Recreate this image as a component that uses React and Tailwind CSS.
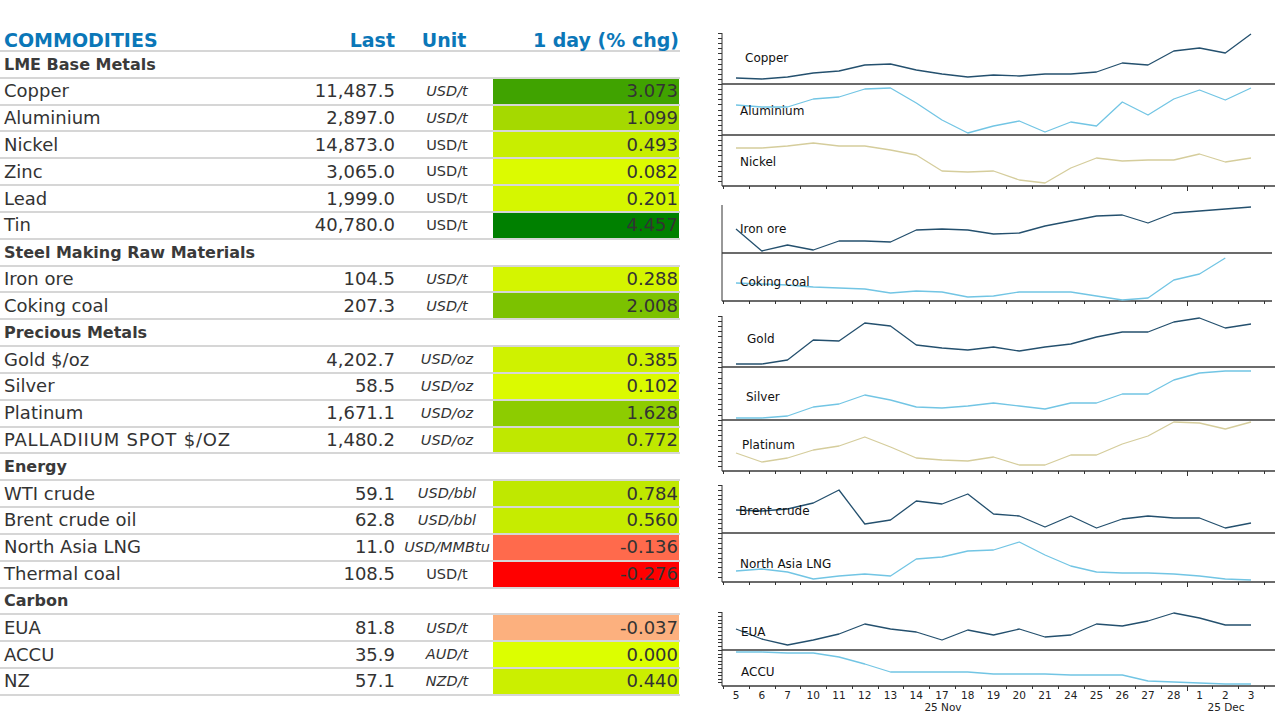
import React from "react";

const rows = [
  { sec: "LME Base Metals" },
  { n: "Copper", l: "11,487.5", u: "USD/t", it: true, c: "3.073", bg: "bg-[#40a300]" },
  { n: "Aluminium", l: "2,897.0", u: "USD/t", it: true, c: "1.099", bg: "bg-[#a5d900]" },
  { n: "Nickel", l: "14,873.0", u: "USD/t", it: false, c: "0.493", bg: "bg-[#c8ee00]" },
  { n: "Zinc", l: "3,065.0", u: "USD/t", it: false, c: "0.082", bg: "bg-[#dcfb00]" },
  { n: "Lead", l: "1,999.0", u: "USD/t", it: false, c: "0.201", bg: "bg-[#d5f700]" },
  { n: "Tin", l: "40,780.0", u: "USD/t", it: false, c: "4.457", bg: "bg-[#008000]" },
  { sec: "Steel Making Raw Materials" },
  { n: "Iron ore", l: "104.5", u: "USD/t", it: true, c: "0.288", bg: "bg-[#d4f500]" },
  { n: "Coking coal", l: "207.3", u: "USD/t", it: true, c: "2.008", bg: "bg-[#7cc200]" },
  { sec: "Precious Metals" },
  { n: "Gold $/oz", l: "4,202.7", u: "USD/oz", it: true, c: "0.385", bg: "bg-[#cff200]" },
  { n: "Silver", l: "58.5", u: "USD/oz", it: true, c: "0.102", bg: "bg-[#dbfa00]" },
  { n: "Platinum", l: "1,671.1", u: "USD/oz", it: true, c: "1.628", bg: "bg-[#8dcc00]" },
  { n: "PALLADIIUM SPOT $/OZ", l: "1,480.2", u: "USD/oz", it: true, c: "0.772", bg: "bg-[#bfe800]", x: "tracking-[0.8px]" },
  { sec: "Energy" },
  { n: "WTI crude", l: "59.1", u: "USD/bbl", it: true, c: "0.784", bg: "bg-[#bfe800]" },
  { n: "Brent crude oil", l: "62.8", u: "USD/bbl", it: true, c: "0.560", bg: "bg-[#c6ec00]" },
  { n: "North Asia LNG", l: "11.0", u: "USD/MMBtu", it: true, c: "-0.136", bg: "bg-[#ff6a4c]" },
  { n: "Thermal coal", l: "108.5", u: "USD/t", it: false, c: "-0.276", bg: "bg-[#ff0000]" },
  { sec: "Carbon" },
  { n: "EUA", l: "81.8", u: "USD/t", it: true, c: "-0.037", bg: "bg-[#fcb07e]" },
  { n: "ACCU", l: "35.9", u: "AUD/t", it: true, c: "0.000", bg: "bg-[#dcff00]" },
  { n: "NZ", l: "57.1", u: "NZD/t", it: true, c: "0.440", bg: "bg-[#cbef00]" },
];

const X = (i) => 736 + i * 25.75;
const DARK = "#24506e";
const LIGHT = "#72c5e4";
const KHAKI = "#d5cd9c";

const series = [
  { label: "Copper", lx: 745, ly: 62, color: DARK, y: [78, 79, 77, 73, 71, 65, 64, 70, 74, 77, 75, 76, 74, 74, 72, 63, 65, 51, 48, 53, 34] },
  { label: "Aluminium", lx: 740, ly: 115, color: LIGHT, y: [105, 107, 107, 99, 97, 89, 88, 103, 120, 133, 126, 121, 132, 122, 126, 102, 115, 99, 90, 100, 88] },
  { label: "Nickel", lx: 740, ly: 166, color: KHAKI, y: [148, 148, 146, 143, 146, 146, 150, 155, 171, 172, 171, 180, 183, 168, 158, 161, 160, 160, 154, 162, 158] },
  { label: "Iron ore", lx: 740, ly: 233, color: DARK, y: [229, 251, 245, 250, 241, 241, 242, 230, 229, 230, 234, 233, 226, 221, 216, 215, 223, 213, 211, 209, 207] },
  { label: "Coking coal", lx: 740, ly: 286, color: LIGHT, y: [283, 284, 285, 287, 288, 289, 293, 291, 292, 297, 296, 292, 292, 292, 296, 300, 298, 280, 274, 258] },
  { label: "Gold", lx: 747, ly: 343, color: DARK, y: [364, 364, 360, 340, 341, 323, 326, 345, 348, 350, 347, 351, 347, 344, 337, 332, 332, 322, 318, 328, 324] },
  { label: "Silver", lx: 746, ly: 401, color: LIGHT, y: [418, 418, 416, 407, 404, 395, 400, 407, 408, 406, 403, 406, 409, 403, 403, 394, 394, 380, 373, 371, 371] },
  { label: "Platinum", lx: 742, ly: 449, color: KHAKI, y: [453, 462, 458, 450, 446, 437, 447, 458, 460, 461, 457, 465, 465, 455, 455, 444, 436, 422, 423, 429, 422] },
  { label: "Brent crude", lx: 739, ly: 515, color: DARK, y: [510, 511, 509, 503, 490, 524, 520, 501, 504, 494, 514, 516, 527, 516, 528, 519, 516, 518, 518, 528, 523] },
  { label: "North Asia LNG", lx: 740, ly: 568, color: LIGHT, y: [571, 569, 572, 579, 576, 574, 576, 559, 557, 551, 550, 542, 555, 566, 572, 573, 573, 574, 576, 579, 580] },
  { label: "EUA", lx: 741, ly: 636, color: DARK, y: [629, 639, 645, 640, 634, 624, 629, 632, 640, 630, 635, 629, 637, 635, 624, 626, 621, 613, 618, 625, 625] },
  { label: "ACCU", lx: 741, ly: 676, color: LIGHT, y: [652, 652, 653, 653, 657, 664, 672, 672, 672, 672, 674, 674, 674, 675, 675, 675, 681, 682, 683, 684, 684] },
];

const groups = [
  { top: 33, seps: [84, 135], bottom: 186, ticks: true, end: 1275 },
  { top: 205, seps: [253], bottom: 301, ticks: false, end: 1272 },
  { top: 316, seps: [367, 420], bottom: 471, ticks: true, end: 1275 },
  { top: 485, seps: [533], bottom: 582, ticks: true, end: 1275 },
  { top: 612, seps: [650], bottom: 686, ticks: true, end: 1275 },
];

const dates = ["5", "6", "7", "10", "11", "12", "13", "14", "17", "18", "19", "20", "21", "24", "25", "26", "27", "28", "1", "2", "3"];

function Charts() {
  const els = [];
  groups.forEach((g, gi) => {
    const bounds = [g.top, ...g.seps, g.bottom];
    els.push(<line key={`v${gi}`} x1={722} y1={g.top} x2={722} y2={g.bottom} stroke="#333" strokeWidth="1" />);
    if (g.ticks) {
      for (let p = 0; p < bounds.length - 1; p++) {
        const h = bounds[p + 1] - bounds[p];
        for (let k = 0; k < 10; k++) {
          const yy = Math.round(bounds[p] + (h * k) / 10) + 0.5;
          els.push(<line key={`t${gi}-${p}-${k}`} x1={718} y1={yy} x2={722} y2={yy} stroke="#333" strokeWidth="1" />);
        }
      }
    }
    g.seps.forEach((s, si) => {
      els.push(<line key={`s${gi}-${si}`} x1={722} y1={s} x2={g.end} y2={s} stroke="#3a3a3a" strokeWidth="1.5" />);
    });
    els.push(<line key={`b${gi}`} x1={722} y1={g.bottom} x2={g.end} y2={g.bottom} stroke="#3a3a3a" strokeWidth="1.5" />);
    for (let k = 0; k <= 21; k++) {
      const xx = Math.round(723 + 25.75 * k) + 0.5;
      els.push(<line key={`x${gi}-${k}`} x1={xx} y1={g.bottom} x2={xx} y2={g.bottom + (k === 18 ? 5 : 3)} stroke="#333" strokeWidth="1" />);
    }
  });
  series.forEach((s, si) => {
    const pts = s.y.map((v, i) => `${X(i).toFixed(1)},${v}`).join(" ");
    els.push(<polyline key={`p${si}`} points={pts} fill="none" stroke={s.color} strokeWidth="1.3" strokeLinejoin="round" />);
  });
  series.forEach((s, si) => {
    els.push(
      <text key={`l${si}`} x={s.lx} y={s.ly} fontSize="12" fill="#111" fontFamily="'DejaVu Sans', sans-serif">
        {s.label}
      </text>
    );
  });
  dates.forEach((d, i) => {
    els.push(
      <text key={`d${i}`} x={X(i)} y={699} fontSize="10.5" fill="#222" textAnchor="middle" fontFamily="'DejaVu Sans', sans-serif">
        {d}
      </text>
    );
  });
  els.push(<text key="nov" x={943} y={711} fontSize="10.5" fill="#222" textAnchor="middle" fontFamily="'DejaVu Sans', sans-serif">25 Nov</text>);
  els.push(<text key="dec" x={1226} y={711} fontSize="10.5" fill="#222" textAnchor="middle" fontFamily="'DejaVu Sans', sans-serif">25 Dec</text>);
  return (
    <svg width="580" height="720" viewBox="700 0 580 720" className="block">
      {els}
    </svg>
  );
}

export default function App() {
  return (
    <div className="w-[1280px] h-[720px] bg-white flex overflow-hidden text-[#333]" style={{ fontFamily: "'DejaVu Sans', Verdana, sans-serif" }}>
      <div className="w-[680px] shrink-0 pt-[26px]">
        <div className="grid grid-cols-[300px_101px_92px_187px] h-[26px] pt-[4px] items-center border-b-2 border-[#d6d6d6] text-[19px] font-bold text-[#0b77b8] leading-none">
          <div className="pl-[4px]">COMMODITIES</div>
          <div className="text-right pr-[6px]">Last</div>
          <div className="text-center pr-[6px]">Unit</div>
          <div className="text-right pr-[1px]">1 day (% chg)</div>
        </div>
        {rows.map((r, i) =>
          r.sec ? (
            <div key={i} className="h-[26.83px] flex items-center pt-[1px] border-b-2 border-[#d6d6d6] pl-[4px] text-[16px] font-bold text-[#3a3a3a] leading-none">
              {r.sec}
            </div>
          ) : (
            <div key={i} className="grid grid-cols-[300px_101px_92px_187px] h-[26.83px] items-stretch border-b-2 border-[#d6d6d6] leading-none">
              <div className={`flex items-center pl-[4px] text-[18px] whitespace-nowrap ${r.x || ""}`}>{r.n}</div>
              <div className="flex items-center justify-end pr-[6px] text-[18px]">{r.l}</div>
              <div className={`flex items-center justify-center text-[14.5px] whitespace-nowrap ${r.it ? "italic" : ""}`}>{r.u}</div>
              <div className={`flex items-center justify-end pr-[1px] mr-[1px] text-[18px] text-[#333] ${r.bg}`}>{r.c}</div>
            </div>
          )
        )}
      </div>
      <div className="ml-[20px] shrink-0">
        <Charts />
      </div>
    </div>
  );
}
